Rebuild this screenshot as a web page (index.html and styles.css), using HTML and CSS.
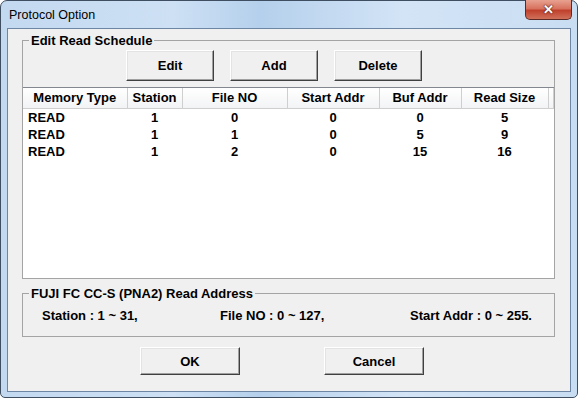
FILE: index.html
```html
<!DOCTYPE html>
<html lang="en">
<head>
  <meta charset="UTF-8" />
  <title>Protocol Option</title>
  <link rel="stylesheet" href="styles.css">
</head>
<body>

  <div class="window">
    <!-- Title bar -->
    <div class="titlebar">
      <span class="title">Protocol Option</span>
      <button class="close-btn" type="button">&#x2715;</button>
    </div>

    <!-- Dialog client area -->
    <div class="client">

      <fieldset class="group schedule">
        <legend>Edit Read Schedule</legend>
        <div class="toolbar">
          <button class="win-btn tool-btn" type="button">Edit</button>
          <button class="win-btn tool-btn" type="button">Add</button>
          <button class="win-btn tool-btn" type="button">Delete</button>
        </div>

        <div class="list">
          <table class="schedule-table">
            <colgroup>
              <col class="c-type">
              <col class="c-station">
              <col class="c-file">
              <col class="c-start">
              <col class="c-buf">
              <col class="c-size">
              <col>
            </colgroup>
            <thead>
              <tr>
                <th>Memory Type</th>
                <th>Station</th>
                <th>File NO</th>
                <th>Start Addr</th>
                <th>Buf Addr</th>
                <th>Read Size</th>
                <th></th>
              </tr>
            </thead>
            <tbody>
              <tr><td>READ</td><td>1</td><td>0</td><td>0</td><td>0</td><td>5</td><td></td></tr>
              <tr><td>READ</td><td>1</td><td>1</td><td>0</td><td>5</td><td>9</td><td></td></tr>
              <tr><td>READ</td><td>1</td><td>2</td><td>0</td><td>15</td><td>16</td><td></td></tr>
            </tbody>
          </table>
        </div>
      </fieldset>

      <fieldset class="group address">
        <legend>FUJI FC CC-S (PNA2) Read Address</legend>
        <div class="ranges">
          <span>Station : 1 ~ 31,</span>
          <span>File NO : 0 ~ 127,</span>
          <span>Start Addr : 0 ~ 255.</span>
        </div>
      </fieldset>

      <div class="actions">
        <button class="win-btn dlg-btn" type="button">OK</button>
        <button class="win-btn dlg-btn" type="button">Cancel</button>
      </div>

    </div>
  </div>

</body>
</html>
```

FILE: styles.css
```css
body {
  margin: 0;
  padding: 0;
  background-color: #ffffff;
  font-family: "Liberation Sans", Arial, sans-serif;
  color: #000;
}

/* Window frame */
.window {
  width: 578px;
  height: 398px;
  box-sizing: border-box;
  border: 1px solid #3f4f61;
  border-radius: 7px 7px 5px 5px;
  background: linear-gradient(90deg, #c3d9f0 0%, #cde0f4 30%, #b5d0ec 45%, #d3e4f6 70%, #c9ddf2 100%);
  padding: 0 6px 5px 6px;
  display: flex;
  flex-direction: column;
}

.titlebar {
  position: relative;
  height: 27px;
  display: flex;
  align-items: center;
}

.title {
  font-size: 12.5px;
  margin-left: 2px;
  margin-top: 1px;
}

.close-btn {
  position: absolute;
  top: -1px;
  right: -1px;
  width: 47px;
  height: 20px;
  border: 1px solid #5b2a26;
  border-top: none;
  border-radius: 0 0 5px 5px;
  background: linear-gradient(#e8a190 0%, #d7725f 45%, #c0412d 55%, #d0705a 100%);
  color: #fff;
  font-size: 13px;
  font-weight: bold;
  text-shadow: 0 0 2px #4a1a14, 0 0 1px #4a1a14;
  padding: 0;
}

/* Client area */
.client {
  flex: 1;
  background-color: #f0f0f0;
  border: 1px solid #6d86a3;
  padding: 4px 15px 0 14px;
  display: flex;
  flex-direction: column;
}

.group {
  margin: 0;
  padding: 0;
  border: 1px solid #a4a4a4;
  min-width: 0;
}

.group legend {
  font-size: 13px;
  font-weight: bold;
  padding: 0 2px;
  margin-left: 6px;
  line-height: 15px;
}

.schedule {
  padding-top: 2px;
}

.toolbar {
  display: flex;
  gap: 16px;
  margin-left: 103px;
}

/* Buttons */
.win-btn {
  font-family: "Liberation Sans", Arial, sans-serif;
  font-size: 13px;
  font-weight: bold;
  color: #000;
  background-color: #f0f0f0;
  border: 1px solid;
  border-color: #ffffff #404040 #404040 #ffffff;
  box-shadow: inset -1px -1px 0 #a0a0a0, inset 1px 1px 0 #e3e3e3;
  padding: 0;
}

.tool-btn {
  width: 88px;
  height: 31px;
}

.dlg-btn {
  width: 100px;
  height: 28px;
}

/* List view */
.list {
  margin-top: 6px;
  height: 190px;
  background-color: #ffffff;
  border-top: 1px solid #828790;
}

.schedule-table {
  width: 100%;
  table-layout: fixed;
  border-collapse: collapse;
  font-size: 13px;
  font-weight: bold;
}

.c-type { width: 104px; }
.c-station { width: 55px; }
.c-file { width: 105px; }
.c-start { width: 92px; }
.c-buf { width: 82px; }
.c-size { width: 87px; }

.schedule-table th {
  height: 20px;
  padding: 0;
  background: linear-gradient(#ffffff, #f2f3f5);
  border-right: 1px solid #cfcfcf;
  border-bottom: 1px solid #cfcfcf;
  text-align: center;
  box-sizing: border-box;
}

.schedule-table td {
  height: 17px;
  padding: 0;
  text-align: center;
}

.schedule-table td:first-child {
  text-align: left;
  padding-left: 5px;
}

/* Address group */
.address {
  margin-top: 7px;
  padding: 7px 0 13px 0;
}

.ranges {
  display: grid;
  grid-template-columns: 178px 190px auto;
  padding-left: 19px;
  font-size: 13px;
  font-weight: bold;
  line-height: 15px;
}

.actions {
  display: flex;
  gap: 84px;
  margin-top: 10px;
  margin-left: 118px;
}
```
